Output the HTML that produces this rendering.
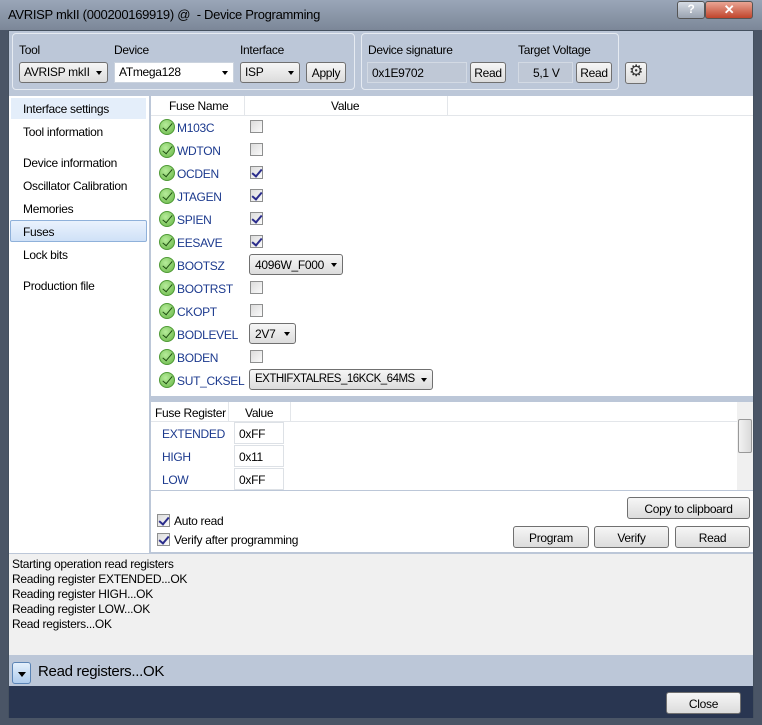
<!DOCTYPE html>
<html><head><style>
*{box-sizing:border-box;margin:0;padding:0}
body{width:762px;height:725px;background:#4a5566;font-family:"Liberation Sans",sans-serif;font-size:12px;letter-spacing:-0.3px;color:#000;position:relative;overflow:hidden}
.a{position:absolute}
.title{left:0;top:0;width:762px;height:30px;background:linear-gradient(#9aa6b8,#7c8798);}
.frame{left:8px;top:30px;width:746px;height:688px;background:#bcc7d8;border:1px solid #44505f}
.btn{position:absolute;border:1px solid #707070;border-radius:3px;background:linear-gradient(#f6f6f6,#dcdcdc);text-align:center;font-size:12px;color:#000}
.cb{position:absolute;width:13px;height:13px;border:1px solid #8e8f8f;background:linear-gradient(135deg,#dcdcdc,#fafafa)}
.cb.on::after{content:"";position:absolute;left:3px;top:0px;width:4px;height:8px;border:solid #2b2d8c;border-width:0 2px 2px 0;transform:rotate(40deg)}
.ok{position:absolute;width:16px;height:16px;border-radius:50%;background:radial-gradient(circle at 40% 35%,#b6ec9a,#66b545);border:1px solid #4f9a36}
.ok::after{content:"";position:absolute;left:5px;top:1px;width:4px;height:9px;border:solid #1f4f12;border-width:0 1.5px 1.5px 0;transform:rotate(40deg)}
.fn{position:absolute;color:#1c3a8e;font-size:12px}
.dd::after{content:"";position:absolute;right:5px;top:8px;border:3.5px solid transparent;border-top:4px solid #000;border-bottom:0}
.nav{position:absolute;left:13px;font-size:12px}
.log div{height:15px}
</style></head><body>
<div class="a title"></div>
<div class="a" style="left:8px;top:7px;font-size:13px;color:#000">AVRISP mkII (000200169919) @&nbsp; - Device Programming</div>
<div class="a" style="left:677px;top:1px;width:28px;height:18px;border:1px solid #555;border-radius:3px;background:linear-gradient(#d5dbe4,#9aa3b0);color:#fff;text-align:center;font-weight:bold;font-size:12px">?</div>
<div class="a" style="left:705px;top:1px;width:48px;height:18px;border:1px solid #555;border-radius:3px;background:linear-gradient(#e9a594,#c0452c);color:#fff;text-align:center;font-weight:bold;font-size:13px">✕</div>
<div class="a frame"></div>
<div class="a" style="left:12px;top:33px;width:343px;height:57px;border:1px solid #e6ebf2;border-radius:4px"></div>
<div class="a" style="left:361px;top:33px;width:258px;height:57px;border:1px solid #e6ebf2;border-radius:4px"></div>
<div class="a" style="left:19px;top:43px">Tool</div>
<div class="a" style="left:114px;top:43px">Device</div>
<div class="a" style="left:240px;top:43px">Interface</div>
<div class="btn dd" style="left:19px;top:62px;width:89px;height:21px;text-align:left;padding:2px 0 0 4px">AVRISP mkII</div>
<div class="a dd" style="left:114px;top:62px;width:120px;height:21px;background:#fff;border:1px solid #cbd3de;padding:2px 0 0 4px">ATmega128</div>
<div class="btn dd" style="left:240px;top:62px;width:60px;height:21px;text-align:left;padding:2px 0 0 4px">ISP</div>
<div class="btn" style="left:306px;top:62px;width:40px;height:21px;padding-top:3px">Apply</div>
<div class="a" style="left:368px;top:43px">Device signature</div>
<div class="a" style="left:518px;top:43px">Target Voltage</div>
<div class="a" style="left:367px;top:62px;width:100px;height:21px;background:#bfc8d6;border:1px solid #d3dae4;padding:3px 0 0 4px">0x1E9702</div>
<div class="btn" style="left:470px;top:62px;width:36px;height:21px;padding-top:3px">Read</div>
<div class="a" style="left:518px;top:62px;width:55px;height:21px;background:#bfc8d6;border:1px solid #d3dae4;padding:3px 0 0 14px">5,1 V</div>
<div class="btn" style="left:576px;top:62px;width:36px;height:21px;padding-top:3px">Read</div>
<div class="btn" style="left:625px;top:62px;width:22px;height:22px;font-size:16px;line-height:18px;color:#333">⚙</div>
<div class="a" style="left:9px;top:96px;width:140px;height:457px;background:#fff"></div>
<div class="a" style="left:11px;top:98px;width:135px;height:21px;background:#e4eefa"></div>
<div class="a" style="left:10px;top:220px;width:137px;height:22px;background:linear-gradient(#eaf2fd,#cfe1f7);border:1px solid #8fb1da;border-radius:2px"></div>
<div class="nav" style="left:23px;top:102px">Interface settings</div>
<div class="nav" style="left:23px;top:125px">Tool information</div>
<div class="nav" style="left:23px;top:156px">Device information</div>
<div class="nav" style="left:23px;top:179px">Oscillator Calibration</div>
<div class="nav" style="left:23px;top:202px">Memories</div>
<div class="nav" style="left:23px;top:225px">Fuses</div>
<div class="nav" style="left:23px;top:248px">Lock bits</div>
<div class="nav" style="left:23px;top:279px">Production file</div>
<div class="a" style="left:151px;top:96px;width:602px;height:300px;background:#fff"></div>
<div class="a" style="left:151px;top:96px;width:602px;height:20px;border-bottom:1px solid #e3e6ea"></div>
<div class="a" style="left:244px;top:96px;width:1px;height:19px;background:#e3e6ea"></div>
<div class="a" style="left:447px;top:96px;width:1px;height:19px;background:#e3e6ea"></div>
<div class="a" style="left:169px;top:99px">Fuse Name</div>
<div class="a" style="left:331px;top:99px">Value</div>

<div class="ok" style="left:159px;top:119px"></div><div class="fn" style="left:177px;top:121px">M103C</div><div class="cb" style="left:250px;top:120px"></div>
<div class="ok" style="left:159px;top:142px"></div><div class="fn" style="left:177px;top:144px">WDTON</div><div class="cb" style="left:250px;top:143px"></div>
<div class="ok" style="left:159px;top:165px"></div><div class="fn" style="left:177px;top:167px">OCDEN</div><div class="cb on" style="left:250px;top:166px"></div>
<div class="ok" style="left:159px;top:188px"></div><div class="fn" style="left:177px;top:190px">JTAGEN</div><div class="cb on" style="left:250px;top:189px"></div>
<div class="ok" style="left:159px;top:211px"></div><div class="fn" style="left:177px;top:213px">SPIEN</div><div class="cb on" style="left:250px;top:212px"></div>
<div class="ok" style="left:159px;top:234px"></div><div class="fn" style="left:177px;top:236px">EESAVE</div><div class="cb on" style="left:250px;top:235px"></div>
<div class="ok" style="left:159px;top:257px"></div><div class="fn" style="left:177px;top:259px">BOOTSZ</div><div class="btn dd" style="left:249px;top:254px;width:94px;height:21px;text-align:left;padding:3px 0 0 5px">4096W_F000</div>
<div class="ok" style="left:159px;top:280px"></div><div class="fn" style="left:177px;top:282px">BOOTRST</div><div class="cb" style="left:250px;top:281px"></div>
<div class="ok" style="left:159px;top:303px"></div><div class="fn" style="left:177px;top:305px">CKOPT</div><div class="cb" style="left:250px;top:304px"></div>
<div class="ok" style="left:159px;top:326px"></div><div class="fn" style="left:177px;top:328px">BODLEVEL</div><div class="btn dd" style="left:249px;top:323px;width:47px;height:21px;text-align:left;padding:3px 0 0 5px">2V7</div>
<div class="ok" style="left:159px;top:349px"></div><div class="fn" style="left:177px;top:351px">BODEN</div><div class="cb" style="left:250px;top:350px"></div>
<div class="ok" style="left:159px;top:372px"></div><div class="fn" style="left:177px;top:374px">SUT_CKSEL</div><div class="btn dd" style="left:249px;top:369px;width:184px;height:21px;text-align:left;padding:3px 0 0 5px;font-size:11.5px;letter-spacing:-0.5px">EXTHIFXTALRES_16KCK_64MS</div>
<div class="a" style="left:151px;top:402px;width:602px;height:88px;background:#fff"></div>
<div class="a" style="left:151px;top:402px;width:586px;height:20px;border-bottom:1px solid #e3e6ea"></div>
<div class="a" style="left:228px;top:402px;width:1px;height:19px;background:#e3e6ea"></div>
<div class="a" style="left:290px;top:402px;width:1px;height:19px;background:#e3e6ea"></div>
<div class="a" style="left:155px;top:406px">Fuse Register</div>
<div class="a" style="left:245px;top:406px">Value</div>
<div class="a" style="left:737px;top:402px;width:16px;height:88px;background:#f0f0f0"></div>
<div class="a" style="left:738px;top:419px;width:14px;height:34px;background:linear-gradient(90deg,#f2f2f2,#dadada);border:1px solid #999;border-radius:2px"></div>
<div class="a" style="left:162px;top:427px;color:#1c3a8e">EXTENDED</div>
<div class="a" style="left:162px;top:450px;color:#1c3a8e">HIGH</div>
<div class="a" style="left:162px;top:473px;color:#1c3a8e">LOW</div>
<div class="a" style="left:234px;top:422px;width:50px;height:22px;border:1px solid #dde1e6;padding:4px 0 0 4px">0xFF</div>
<div class="a" style="left:234px;top:445px;width:50px;height:22px;border:1px solid #dde1e6;padding:4px 0 0 4px">0x11</div>
<div class="a" style="left:234px;top:468px;width:50px;height:22px;border:1px solid #dde1e6;padding:4px 0 0 4px">0xFF</div>
<div class="a" style="left:151px;top:491px;width:602px;height:61px;background:#fff"></div>
<div class="cb on" style="left:157px;top:514px"></div><div class="a" style="left:174px;top:514px">Auto read</div>
<div class="cb on" style="left:157px;top:533px"></div><div class="a" style="left:174px;top:533px">Verify after programming</div>
<div class="btn" style="left:627px;top:497px;width:123px;height:22px;padding-top:4px">Copy to clipboard</div>
<div class="btn" style="left:513px;top:526px;width:76px;height:22px;padding-top:4px">Program</div>
<div class="btn" style="left:594px;top:526px;width:75px;height:22px;padding-top:4px">Verify</div>
<div class="btn" style="left:675px;top:526px;width:75px;height:22px;padding-top:4px">Read</div>
<div class="a log" style="left:9px;top:554px;width:744px;height:101px;background:#f0f0f0;padding:3px 0 0 3px;line-height:15px">
<div>Starting operation read registers</div><div>Reading register EXTENDED...OK</div><div>Reading register HIGH...OK</div><div>Reading register LOW...OK</div><div>Read registers...OK</div></div>
<div class="a" style="left:12px;top:662px;width:19px;height:22px;border:1px solid #5b84b5;border-radius:3px;background:linear-gradient(#e4f0fc,#aecbec)"></div>
<div class="a" style="left:18px;top:672px;border:4px solid transparent;border-top:5px solid #000;border-bottom:0"></div>
<div class="a" style="left:38px;top:663px;font-size:15px">Read registers...OK</div>
<div class="a" style="left:9px;top:686px;width:744px;height:32px;background:#293651"></div>
<div class="btn" style="left:666px;top:692px;width:75px;height:22px;padding-top:4px">Close</div>
</body></html>
